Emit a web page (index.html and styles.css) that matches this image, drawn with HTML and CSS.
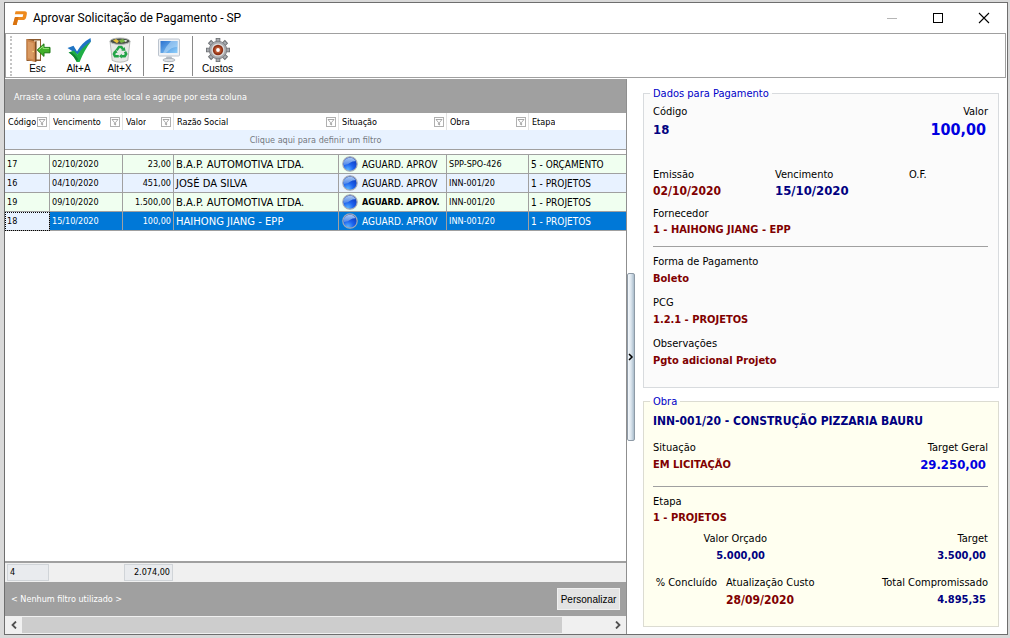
FILE: index.html
```html
<!DOCTYPE html>
<html lang="pt-BR">

<head>
  <meta charset="UTF-8">
  <meta name="viewport" content="width=device-width, initial-scale=1.0">
  <title>Aprovar Solicitação de Pagamento - SP</title>
  <link rel="stylesheet" href="styles.css">
</head>

<body>
  <svg class="defs" width="0" height="0" aria-hidden="true">
    <defs>
      <radialGradient id="ball" cx="0.35" cy="0.9" r="0.9">
        <stop offset="0" stop-color="#5ab4ff"/>
        <stop offset="0.45" stop-color="#1c62ee"/>
        <stop offset="1" stop-color="#0a35b8"/>
      </radialGradient>
      <linearGradient id="shine" x1="0" y1="0" x2="0" y2="1">
        <stop offset="0" stop-color="#a9c6f0"/>
        <stop offset="1" stop-color="#4c86ea"/>
      </linearGradient>
      <symbol id="status" viewBox="0 0 16 16">
        <circle cx="8" cy="8" r="7.2" fill="url(#ball)" stroke="#a3aab5" stroke-width="1.2"/>
        <path d="M1.6 9A6.5 6.5 0 0 1 13.8 5.2Q10.6 5 8.6 6.6Q5.6 9.4 1.6 9Z" fill="url(#shine)"/>
      </symbol>
      <symbol id="funnel" viewBox="0 0 10 10">
        <rect x="0.5" y="0.5" width="9" height="9" fill="#fff" stroke="#b0b0b0"/>
        <path d="M2 2.5H8L5.6 5.4V8L4.4 7.4V5.4Z" fill="#fff" stroke="#858585" stroke-width="0.7"/>
      </symbol>
    </defs>
  </svg>

  <div class="window">
    <header class="titlebar">
      <svg class="titlebar__logo" viewBox="0 0 16 16" width="16" height="16">
        <path d="M3.6 1.2H12.6Q15.4 1.2 14.8 4.2L14.2 7.2Q13.6 10 10.8 10H5.8L4.6 15H0.8L3 6.9H10.6L11.3 4.2H2.8Z" fill="#ee8a1d"/>
        <path d="M3 6.9H6.6L5.8 10L4.6 15H0.8Z" fill="#d9720f"/>
      </svg>
      <h1 class="titlebar__title">Aprovar Solicitação de Pagamento - SP</h1>
      <button class="titlebar__button" aria-label="Minimizar" disabled>
        <svg viewBox="0 0 12 12" width="12" height="12"><path d="M1 6.5H11" stroke="#b5b5b5"/></svg>
      </button>
      <button class="titlebar__button" aria-label="Maximizar">
        <svg viewBox="0 0 12 12" width="12" height="12"><rect x="1.5" y="1.5" width="9" height="9" fill="none" stroke="#000"/></svg>
      </button>
      <button class="titlebar__button" aria-label="Fechar">
        <svg viewBox="0 0 12 12" width="12" height="12"><path d="M1 1L11 11M11 1L1 11" stroke="#000" stroke-width="1.1"/></svg>
      </button>
    </header>

    <nav class="toolbar">
      <button class="tool">
        <svg viewBox="0 0 26 26" width="26" height="26">
          <path d="M1.5 2H16V24H1.5Z" fill="#8b5a2e"/>
          <path d="M9 3.5H15V22.5H9Z" fill="#fbf3e3"/>
          <path d="M1.5 2L10 4.4V25L1.5 22.8Z" fill="#c9834a"/>
          <path d="M3 4.4L8.6 6V22.6L3 21.2Z" fill="#d99a62"/>
          <path d="M10 4.4L11.6 4V24.4L10 25Z" fill="#7d4c22"/>
          <circle cx="8.2" cy="14.5" r="0.8" fill="#ffe08a"/>
          <path d="M12.2 13L19 6.8V10.4H25V15.8H19V19.4Z" fill="#43b02a" stroke="#1d7a14"/>
          <path d="M14 12.8L18 9.2V11.4H24" fill="none" stroke="#9be37c"/>
        </svg>
        Esc
      </button>
      <button class="tool">
        <svg viewBox="0 0 26 26" width="26" height="26">
          <path d="M1.5 11L7.5 8.8L11 14.4Q16 5.6 24.5 1L25 4.4L11.6 17.4Z" fill="#1f74c4"/>
          <path d="M2.5 15.4L8 13.6L11.4 17.6Q17 9.6 25 4.6Q18.2 13.4 13.6 25H10.6Q8 18.6 2.5 15.4Z" fill="#1fae45"/>
          <path d="M10.8 24.6Q8 18.8 3 15.6L5 15Q9.6 18 12 22Z" fill="#128233"/>
        </svg>
        Alt+A
      </button>
      <button class="tool">
        <svg viewBox="0 0 26 26" width="26" height="26">
          <path d="M3 4L5.2 23.4Q13 27 20.8 23.4L23 4Z" fill="#e6e8e6" stroke="#a9adaa" stroke-width="0.8"/>
          <ellipse cx="13" cy="4.2" rx="10" ry="3.2" fill="#49504a" stroke="#b6bab7"/>
          <path d="M6 3.6L9 2L12 4L10 6.2Z" fill="#e8c33b"/>
          <path d="M12 3.2L16 2L18.6 4.4L14 6Z" fill="#77b544"/>
          <path d="M17 3L20 3.2L19 5.2Z" fill="#f3f3f3"/>
          <g fill="none" stroke="#22a447" stroke-width="2.5">
            <path d="M9.6 13.4L12 9.9H14.4L16 12.4"/>
            <path d="M18 14.6L19.2 17L17.8 19.2H14.4"/>
            <path d="M11.8 19.2H8L6.9 17L8.2 14.8"/>
          </g>
          <path d="M14.3 13.8H18.6L17.6 10Z" fill="#22a447"/>
          <path d="M14.8 16.8V21.6L12 19.2Z" fill="#22a447"/>
          <path d="M6 15.4L10.6 16L8.8 12.4Z" fill="#22a447"/>
        </svg>
        Alt+X
      </button>
      <span class="toolbar__divider"></span>
      <button class="tool">
        <svg viewBox="0 0 26 26" width="26" height="26">
          <defs>
            <linearGradient id="screen" x1="0" y1="0" x2="1" y2="1">
              <stop offset="0" stop-color="#2c72cf"/>
              <stop offset="1" stop-color="#8fd0fb"/>
            </linearGradient>
          </defs>
          <rect x="2.5" y="2" width="21" height="17" rx="1" fill="#eef1f5" stroke="#bcc4ce"/>
          <rect x="4.5" y="4" width="17" height="12" fill="url(#screen)"/>
          <path d="M15 4H21.5V10Q16 9 10 16H7Q10 9 15 4Z" fill="#c3e4fc" opacity="0.5"/>
          <path d="M10.5 19.5H15.5L16.5 22H9.5Z" fill="#b7bec6"/>
          <ellipse cx="13" cy="23" rx="6" ry="1.7" fill="#dde1e5" stroke="#9ea6ae" stroke-width="0.8"/>
        </svg>
        F2
      </button>
      <span class="toolbar__divider"></span>
      <button class="tool">
        <svg viewBox="0 0 26 26" width="26" height="26">
          <g stroke="#6c6f73" stroke-width="4.6">
            <path d="M13 1V25M1 13H25M4.5 4.5L21.5 21.5M21.5 4.5L4.5 21.5"/>
          </g>
          <g stroke="#a9acb0" stroke-width="3">
            <path d="M13 1.8V24.2M1.8 13H24.2M5.2 5.2L20.8 20.8M20.8 5.2L5.2 20.8"/>
          </g>
          <circle cx="13" cy="13" r="8.8" fill="#a6a9ad" stroke="#77797d" stroke-width="0.8"/>
          <circle cx="13" cy="13" r="6.6" fill="#d9dadb"/>
          <circle cx="13" cy="13" r="5.2" fill="#8e3116"/>
          <circle cx="13" cy="13" r="3.6" fill="#b8552f"/>
          <circle cx="13" cy="13" r="1.9" fill="#fff"/>
        </svg>
        Custos
      </button>
    </nav>

    <main class="content">
      <section class="list">
        <div class="list__group">Arraste a coluna para este local e agrupe por esta coluna</div>
        <div class="list__body">
          <table class="grid">
            <colgroup>
              <col class="col-codigo">
              <col class="col-vencimento">
              <col class="col-valor">
              <col class="col-razao">
              <col class="col-situacao">
              <col class="col-obra">
              <col>
            </colgroup>
            <thead>
              <tr>
                <th><div class="head"><span>Código</span><button aria-label="Filtrar Código"><svg width="10" height="10"><use href="#funnel"/></svg></button></div></th>
                <th><div class="head"><span>Vencimento</span><button aria-label="Filtrar Vencimento"><svg width="10" height="10"><use href="#funnel"/></svg></button></div></th>
                <th><div class="head"><span>Valor</span><button aria-label="Filtrar Valor"><svg width="10" height="10"><use href="#funnel"/></svg></button></div></th>
                <th><div class="head"><span>Razão Social</span><button aria-label="Filtrar Razão Social"><svg width="10" height="10"><use href="#funnel"/></svg></button></div></th>
                <th><div class="head"><span>Situação</span><button aria-label="Filtrar Situação"><svg width="10" height="10"><use href="#funnel"/></svg></button></div></th>
                <th><div class="head"><span>Obra</span><button aria-label="Filtrar Obra"><svg width="10" height="10"><use href="#funnel"/></svg></button></div></th>
                <th><div class="head"><span>Etapa</span></div></th>
              </tr>
              <tr class="grid__filter">
                <td colspan="7">Clique aqui para definir um filtro</td>
              </tr>
              <tr class="grid__gap">
                <td colspan="7"></td>
              </tr>
            </thead>
            <tbody>
              <tr>
                <td>17</td>
                <td>02/10/2020</td>
                <td class="number">23,00</td>
                <td class="name">B.A.P. AUTOMOTIVA LTDA.</td>
                <td class="text"><div class="status"><svg width="16" height="16"><use href="#status"/></svg><span>AGUARD. APROV</span></div></td>
                <td>SPP-SPO-426</td>
                <td class="text">5 - ORÇAMENTO</td>
              </tr>
              <tr>
                <td>16</td>
                <td>04/10/2020</td>
                <td class="number">451,00</td>
                <td class="name">JOSÉ DA SILVA</td>
                <td class="text"><div class="status"><svg width="16" height="16"><use href="#status"/></svg><span>AGUARD. APROV</span></div></td>
                <td>INN-001/20</td>
                <td class="text">1 - PROJETOS</td>
              </tr>
              <tr>
                <td>19</td>
                <td>09/10/2020</td>
                <td class="number">1.500,00</td>
                <td class="name">B.A.P. AUTOMOTIVA LTDA.</td>
                <td><div class="status"><svg width="16" height="16"><use href="#status"/></svg><b>AGUARD. APROV.</b></div></td>
                <td>INN-001/20</td>
                <td class="text">1 - PROJETOS</td>
              </tr>
              <tr class="selected">
                <td>18</td>
                <td>15/10/2020</td>
                <td class="number">100,00</td>
                <td class="name">HAIHONG JIANG - EPP</td>
                <td class="text"><div class="status"><svg width="16" height="16"><use href="#status"/></svg><span>AGUARD. APROV</span></div></td>
                <td>INN-001/20</td>
                <td class="text">1 - PROJETOS</td>
              </tr>
            </tbody>
          </table>
        </div>
        <div class="summary">
          <span class="summary__count">4</span>
          <span class="summary__total">2.074,00</span>
        </div>
        <div class="filterbar">
          <span>&lt; Nenhum filtro utilizado &gt;</span>
          <button class="filterbar__button">Personalizar</button>
        </div>
        <div class="scroll">
          <button class="scroll__arrow" aria-label="Rolar para a esquerda">
            <svg viewBox="0 0 8 8" width="8" height="8"><path d="M6 0.5L2.5 4L6 7.5" fill="none" stroke="#505050" stroke-width="1.8"/></svg>
          </button>
          <div class="scroll__track"><div class="scroll__thumb"></div></div>
          <button class="scroll__arrow" aria-label="Rolar para a direita">
            <svg viewBox="0 0 8 8" width="8" height="8"><path d="M2 0.5L5.5 4L2 7.5" fill="none" stroke="#505050" stroke-width="1.8"/></svg>
          </button>
        </div>
      </section>

      <div class="splitter">
        <button class="splitter__handle" aria-label="Recolher painel">
          <svg viewBox="0 0 6 8" width="6" height="8"><path d="M1 1L4 4L1 7" fill="none" stroke="#000" stroke-width="1.5"/></svg>
        </button>
      </div>

      <aside class="details">
        <fieldset class="box">
          <legend>Dados para Pagamento</legend>
          <div class="box__content">
            <div class="row row--first">
              <div class="field field--head"><span>Código</span><b class="navy medium">18</b></div>
              <div class="field field--head right"><span>Valor</span><b class="blue large">100,00</b></div>
            </div>
            <div class="row row--dates">
              <div class="field field--compact"><span>Emissão</span><b class="date">02/10/2020</b></div>
              <div class="field field--compact"><span>Vencimento</span><b class="navy medium">15/10/2020</b></div>
              <div class="field field--compact"><span>O.F.</span></div>
            </div>
            <div class="field field--compact"><span>Fornecedor</span><b>1 - HAIHONG JIANG - EPP</b></div>
            <hr>
            <div class="field"><span>Forma de Pagamento</span><b>Boleto</b></div>
            <div class="field"><span>PCG</span><b>1.2.1 - PROJETOS</b></div>
            <div class="field"><span>Observações</span><b>Pgto adicional Projeto</b></div>
          </div>
        </fieldset>

        <fieldset class="box box--yellow">
          <legend>Obra</legend>
          <div class="box__content">
            <h2 class="box__title">INN-001/20 - CONSTRUÇÃO PIZZARIA BAURU</h2>
            <div class="row">
              <div class="field"><span>Situação</span><b>EM LICITAÇÃO</b></div>
              <div class="field right"><span>Target Geral</span><b class="blue medium">29.250,00</b></div>
            </div>
            <hr>
            <div class="field field--compact"><span>Etapa</span><b>1 - PROJETOS</b></div>
            <div class="row row--budget">
              <div class="field field--budget right"><span>Valor Orçado</span><b class="navy">5.000,00</b></div>
              <div class="field right"><span>Target</span><b class="navy">3.500,00</b></div>
            </div>
            <div class="row row--costs">
              <div class="field field--done right"><span>% Concluído</span></div>
              <div class="field"><span>Atualização Custo</span><b class="date">28/09/2020</b></div>
              <div class="field right"><span>Total Compromissado</span><b class="navy">4.895,35</b></div>
            </div>
          </div>
        </fieldset>
      </aside>
    </main>
  </div>
</body>

</html>
```
FILE: styles.css
```css
* {
  box-sizing: border-box;
}

body {
  margin: 0;
  padding: 2px 2px 3px 4px;
  height: 100vh;
  background-color: #d9d9d9;
  font-family: 'DejaVu Sans Condensed', 'DejaVu Sans', sans-serif;
  font-size: 9px;
  color: #000;
}

button {
  margin: 0;
  padding: 0;
  border: none;
  background: none;
  font: inherit;
  color: inherit;
}

svg {
  display: block;
}

.defs {
  position: absolute;
}

.window {
  display: flex;
  flex-direction: column;
  height: 100%;
  background-color: #fff;
  border: 1px solid #6e6e6e;
}

/* title bar */
.titlebar {
  display: flex;
  align-items: center;
  height: 30px;
  padding-left: 7px;
}

.titlebar__title {
  flex: 1;
  margin: 0 0 0 5px;
  font-family: Roboto, 'Open Sans', sans-serif;
  font-size: 12px;
  font-weight: normal;
}

.titlebar__button {
  display: flex;
  align-items: center;
  justify-content: center;
  width: 46px;
  height: 28px;
}

/* toolbar */
.toolbar {
  display: flex;
  align-items: center;
  height: 45px;
  margin-right: 1px;
  padding-left: 4px;
  border: 1px solid #a0a0a0;
}

.toolbar::before {
  content: '';
  width: 5px;
  height: 40px;
  border-left: 2px dotted #c4c4c4;
}

.tool {
  display: flex;
  flex-direction: column;
  align-items: center;
  width: 41px;
  font-family: 'Liberation Sans', sans-serif;
  font-size: 10px;
  line-height: 12px;
}

.toolbar__divider {
  width: 1px;
  height: 40px;
  margin: 0 4px 0 3px;
  background-color: #8a8a8a;
}

.content {
  display: flex;
  flex: 1;
  min-height: 0;
  padding-top: 1px;
}

/* list */
.list {
  display: flex;
  flex-direction: column;
  flex: 1;
  min-width: 0;
  border-right: 1px solid #8f8f8f;
}

.list__group {
  height: 34px;
  padding-left: 9px;
  background-color: #a0a0a0;
  color: #fff;
  line-height: 36px;
}

.list__body {
  flex: 1;
  overflow: hidden;
}

.grid {
  width: 100%;
  table-layout: fixed;
  border-collapse: separate;
  border-spacing: 0;
}

.col-codigo {
  width: 45px;
}

.col-vencimento {
  width: 73px;
}

.col-valor {
  width: 51px;
}

.col-razao {
  width: 165px;
}

.col-situacao {
  width: 108px;
}

.col-obra {
  width: 82px;
}

.grid th {
  height: 17px;
  padding: 0 2px 0 3px;
  border-right: 1px solid #e2e2e2;
  font-weight: normal;
  text-align: left;
}

.grid th:last-child {
  border-right: none;
}

.head {
  display: flex;
  align-items: center;
  justify-content: space-between;
}

.head span {
  overflow: hidden;
  white-space: nowrap;
}

.grid__filter td {
  height: 20px;
  padding: 0;
  background-color: #e8f2ff;
  border-bottom: 1px solid #a0a0a0;
  color: #75797f;
  text-align: center;
}

.grid__gap td {
  height: 5px;
  padding: 0;
  border-bottom: 1px solid #a0a0a0;
}

.grid tbody td {
  height: 19px;
  padding: 0 2px;
  border-right: 1px solid #a0a0a0;
  border-bottom: 1px solid #a0a0a0;
  overflow: hidden;
  white-space: nowrap;
}

.grid tbody td:last-child {
  border-right: none;
}

.grid tbody tr:nth-child(odd) {
  background-color: #f0fff0;
}

.grid tbody tr:nth-child(even) {
  background-color: #e8f2ff;
}

.grid tbody .selected td {
  background-color: #0078d7;
  color: #fff;
}

.grid tbody .selected td:first-child {
  background-color: #e8f2ff;
  color: #000;
  outline: 1px dotted #000;
  outline-offset: -1px;
}

.grid .number {
  text-align: right;
}

.grid .name {
  font-family: 'DejaVu Sans', sans-serif;
  font-size: 10px;
}

.grid .text {
  font-size: 10px;
}

.status {
  display: flex;
  align-items: center;
  gap: 4px;
  padding-left: 1px;
  overflow: hidden;
}

.status svg {
  flex: none;
}

.summary {
  display: flex;
  gap: 75px;
  height: 21px;
  padding: 1px 2px;
  background-color: #f0f0f0;
  border-top: 2px solid #a0a0a0;
  line-height: 15px;
}

.summary span {
  height: 17px;
  padding: 0 2px;
  background-color: #e9ebee;
  border: 1px solid #d0d4d8;
}

.summary__count {
  width: 42px;
}

.summary__total {
  width: 49px;
  text-align: right;
}

.filterbar {
  display: flex;
  align-items: center;
  justify-content: space-between;
  height: 34px;
  padding: 0 6px;
  background-color: #a0a0a0;
  color: #fff;
}

.filterbar__button {
  width: 63px;
  height: 22px;
  background-color: #e3e3e3;
  border: 1px solid #f0f0f0;
  font-family: 'Liberation Sans', sans-serif;
  font-size: 10px;
  color: #000;
}

.scroll {
  display: flex;
  height: 18px;
  background-color: #f0f0f0;
}

.scroll__arrow {
  display: flex;
  align-items: center;
  justify-content: center;
  width: 17px;
}

.scroll__track {
  flex: 1;
  padding: 1px 0;
}

.scroll__thumb {
  width: 92%;
  height: 100%;
  background-color: #cdcdcd;
}

/* splitter */
.splitter {
  display: flex;
  align-items: center;
  width: 8px;
}

.splitter__handle {
  display: flex;
  align-items: center;
  justify-content: center;
  width: 8px;
  height: 168px;
  border: 1px solid #8e9aa6;
  border-radius: 2px;
  background: linear-gradient(to right, #f4f8fb, #dbe5ee 50%, #a9bccb);
}

/* details */
.details {
  width: 372px;
  padding: 7px 8px 0;
}

.box {
  min-width: 0;
  margin: 0;
  padding: 0 7px 17px 6px;
  border: 1px solid #d8dbde;
  background-color: #fbfbfb;
  font-size: 11px;
}

.box--yellow {
  margin-top: 6px;
  background-color: #fffff0;
  border-color: #dcdcd2;
}

.box legend {
  padding: 0 3px;
  line-height: 15px;
  color: #0000c8;
}

.box__content {
  display: flex;
  flex-direction: column;
  gap: 7px;
  padding: 3px 3px 0;
}

.box__title {
  margin: 0 0 3px;
  font-size: 12px;
  line-height: 18px;
  color: #000080;
}

.box hr {
  width: 100%;
  height: 1px;
  margin: 1px 0 0;
  border: none;
  background-color: #a0a0a0;
}

.box--yellow hr {
  margin-top: 5px;
}

.row {
  display: flex;
  justify-content: space-between;
}

.row--first {
  margin-bottom: 20px;
}

.row--dates {
  display: grid;
  grid-template-columns: 122px 134px 1fr;
}

.row--budget {
  margin-top: -2px;
}

.row--costs {
  gap: 9px;
  margin-top: 3px;
}

.row--costs .right:last-child {
  flex: 1;
}

.field {
  display: flex;
  flex-direction: column;
  line-height: 16px;
}

.field b {
  line-height: 18px;
  color: #800000;
}

.field--compact b {
  line-height: 16px;
}

.field--head b {
  line-height: 20px;
}

.field--budget {
  width: 114px;
}

.field--done {
  width: 64px;
}

.field .date {
  font-size: 12px;
}

.field .medium {
  font-size: 13px;
}

.field .large {
  font-size: 16px;
}

.field .navy {
  color: #000080;
}

.field .blue {
  color: #0000e0;
}

.right {
  text-align: right;
}

.right b {
  padding-right: 2px;
}
```
